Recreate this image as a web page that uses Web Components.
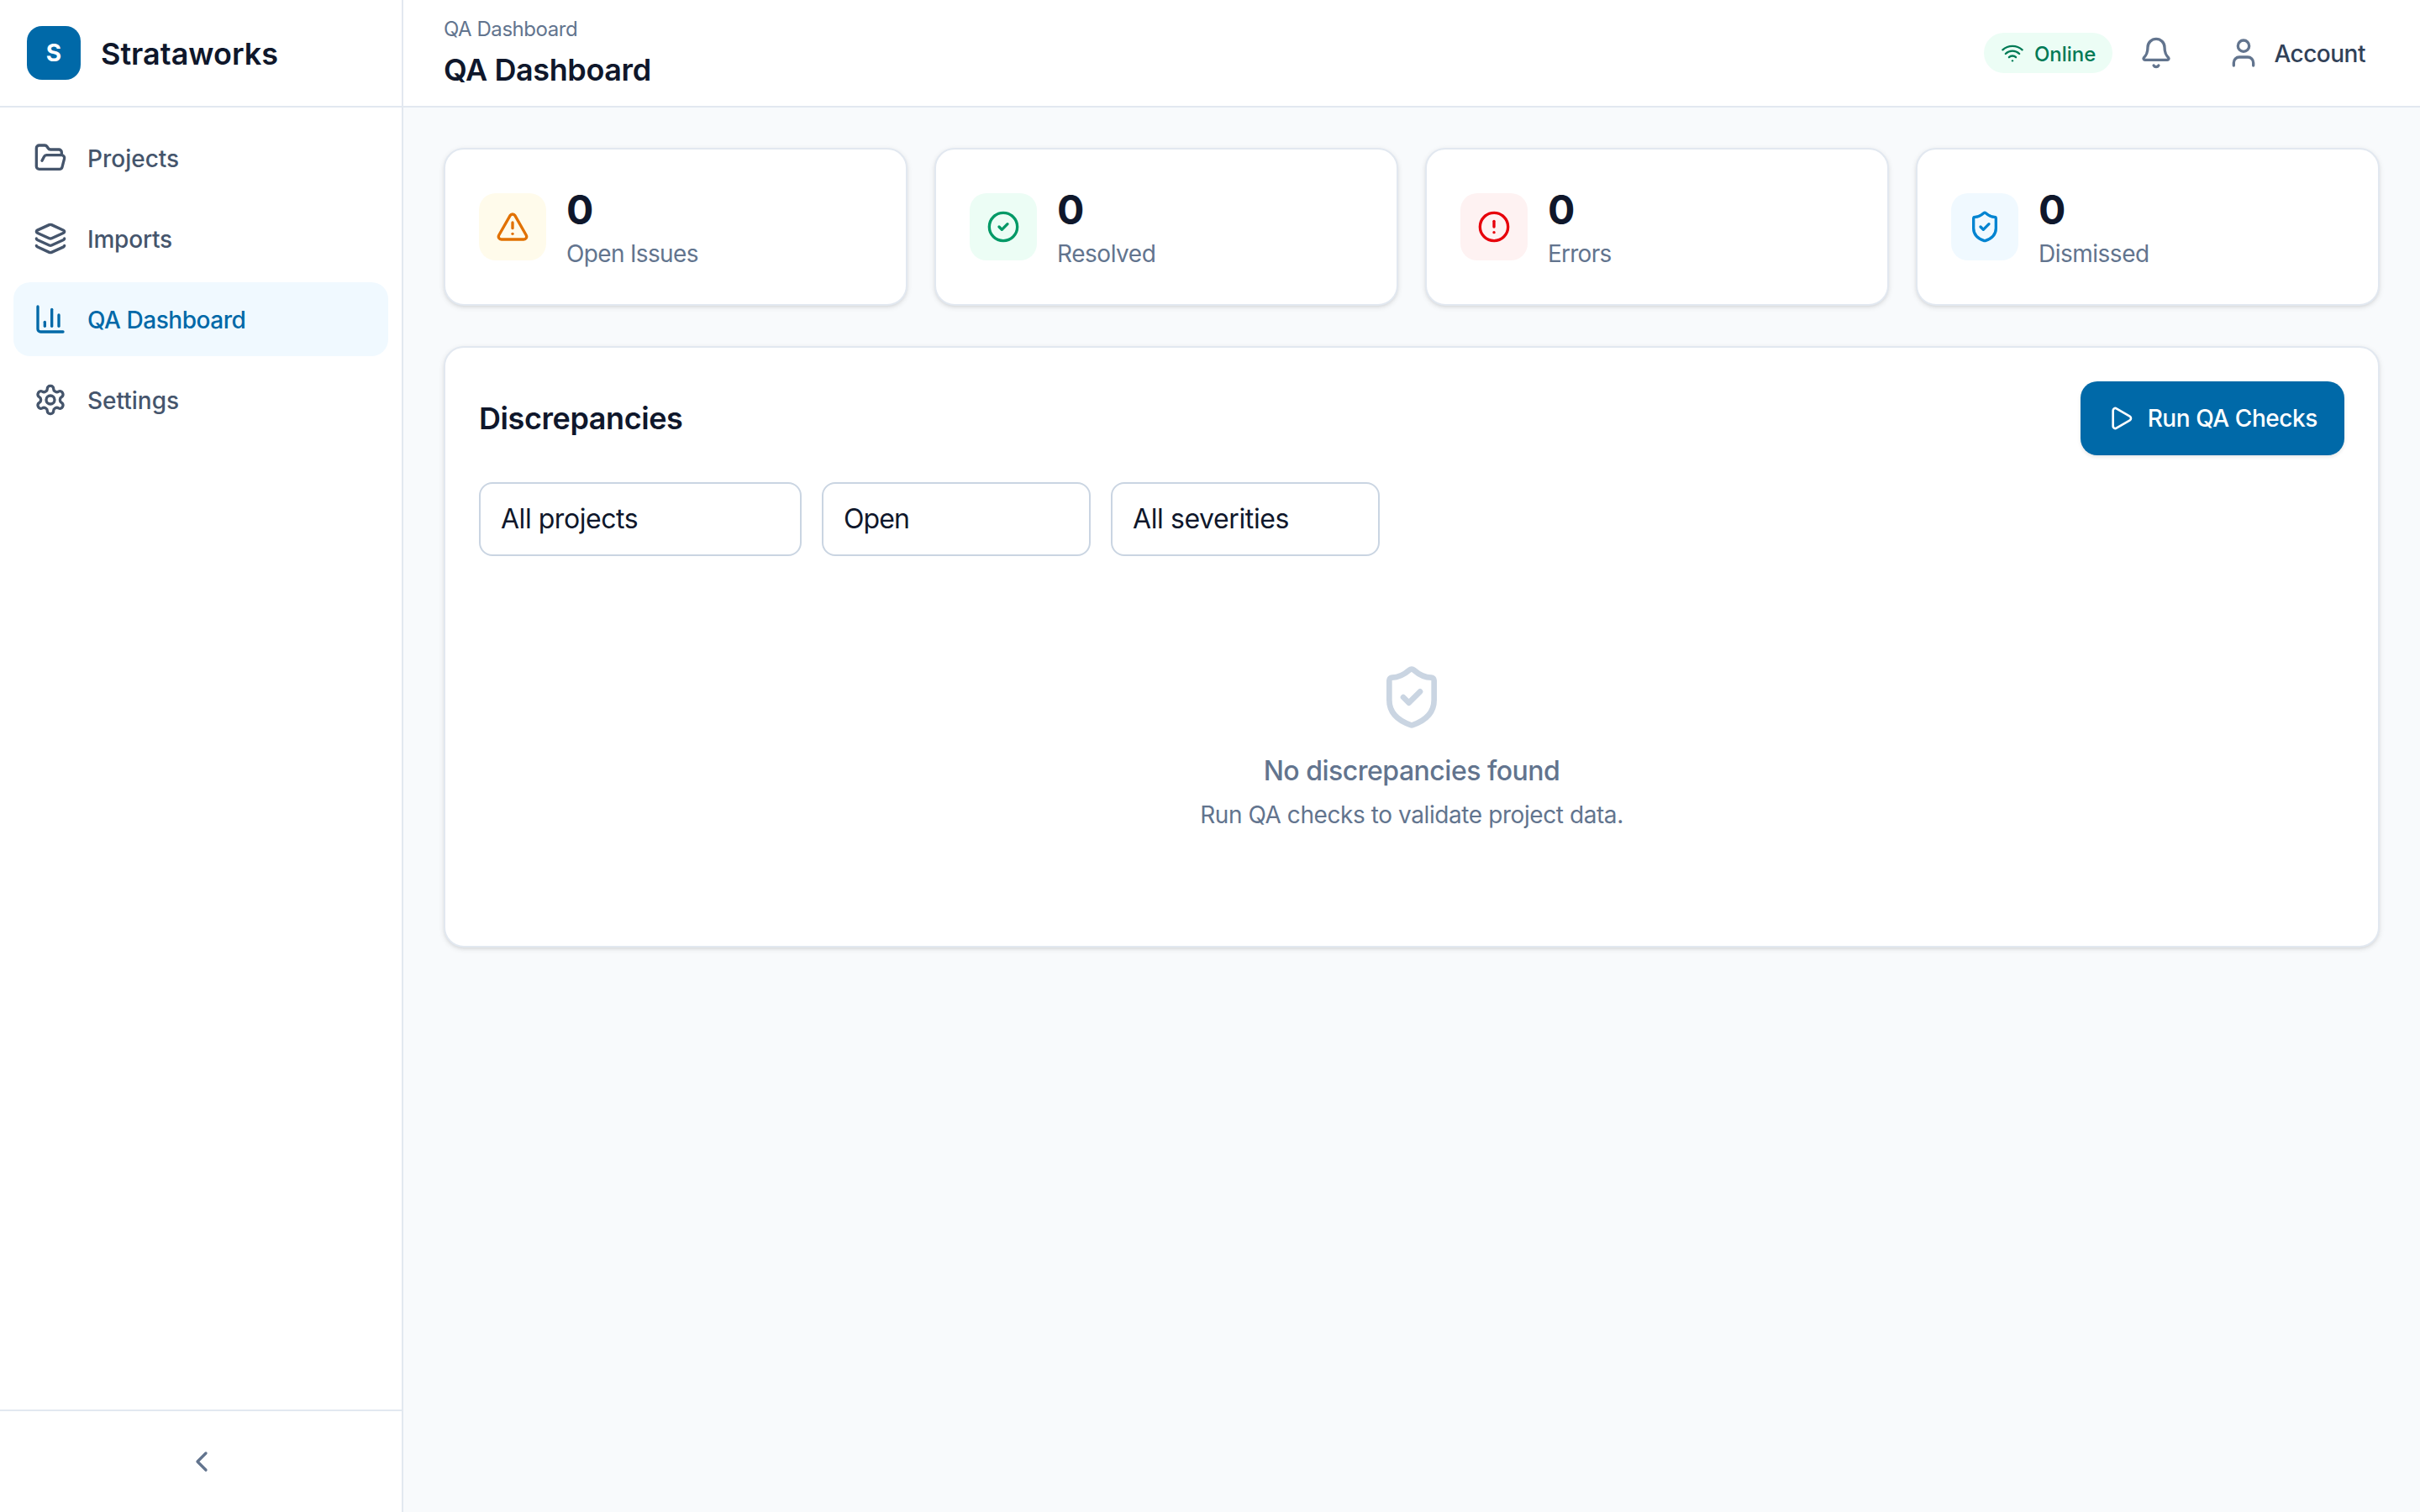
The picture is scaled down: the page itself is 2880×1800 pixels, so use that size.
<!DOCTYPE html>
<html lang="en">
<head>
<meta charset="utf-8">
<title>Strataworks QA Dashboard</title>
<style>
html,body{margin:0;padding:0;height:100%;background:#f8fafc;font-family:Inter,"Liberation Sans",sans-serif;color:#0f172b;-webkit-font-smoothing:antialiased}
</style>
</head>
<body>
<app-shell>
  <side-bar slot="side">
    <nav-item icon="folder">Projects</nav-item>
    <nav-item icon="layers" style="letter-spacing:-.2px">Imports</nav-item>
    <nav-item icon="chart" active style="letter-spacing:-.45px">QA Dashboard</nav-item>
    <nav-item icon="settings">Settings</nav-item>
  </side-bar>
  <top-bar slot="top" crumb="QA Dashboard" heading="QA Dashboard"></top-bar>
  <stat-row>
    <stat-card icon="triangle" tone="amber" value="0" style="letter-spacing:-.66px">Open Issues</stat-card>
    <stat-card icon="check" tone="green" value="0" style="letter-spacing:-.46px">Resolved</stat-card>
    <stat-card icon="alert" tone="red" value="0" style="letter-spacing:-.76px">Errors</stat-card>
    <stat-card icon="shield" tone="sky" value="0" style="letter-spacing:-.5px">Dismissed</stat-card>
  </stat-row>
  <qa-panel heading="Discrepancies">
    <filter-box style="width:384px;letter-spacing:-.46px">All projects</filter-box>
    <filter-box style="width:320px;letter-spacing:-.9px">Open</filter-box>
    <filter-box style="width:320px;letter-spacing:-.4px">All severities</filter-box>
    <empty-state slot="body" heading="No discrepancies found">Run QA checks to validate project data.</empty-state>
  </qa-panel>
</app-shell>
<script>
const ICONS = {
  folder:'<path d="m6 14 1.5-2.9A2 2 0 0 1 9.24 10H20a2 2 0 0 1 1.94 2.5l-1.54 6a2 2 0 0 1-1.94 1.5H4a2 2 0 0 1-2-2V5a2 2 0 0 1 2-2h3.9a2 2 0 0 1 1.69.9l.81 1.2a2 2 0 0 0 1.69.9H18a2 2 0 0 1 2 2v2"/>',
  layers:'<path d="M12.83 2.18a2 2 0 0 0-1.66 0L2.6 6.08a1 1 0 0 0 0 1.83l8.58 3.91a2 2 0 0 0 1.66 0l8.58-3.9a1 1 0 0 0 0-1.83z"/><path d="M2 12a1 1 0 0 0 .58.91l8.6 3.91a2 2 0 0 0 1.65 0l8.58-3.9A1 1 0 0 0 22 12"/><path d="M2 17a1 1 0 0 0 .58.91l8.6 3.91a2 2 0 0 0 1.65 0l8.58-3.9A1 1 0 0 0 22 17"/>',
  chart:'<path d="M3 3v16a2 2 0 0 0 2 2h16"/><path d="M18 17V9"/><path d="M13 17V5"/><path d="M8 17v-3"/>',
  settings:'<path d="M12.22 2h-.44a2 2 0 0 0-2 2v.18a2 2 0 0 1-1 1.73l-.43.25a2 2 0 0 1-2 0l-.15-.08a2 2 0 0 0-2.73.73l-.22.38a2 2 0 0 0 .73 2.73l.15.1a2 2 0 0 1 1 1.72v.51a2 2 0 0 1-1 1.74l-.15.09a2 2 0 0 0-.73 2.73l.22.38a2 2 0 0 0 2.73.73l.15-.08a2 2 0 0 1 2 0l.43.25a2 2 0 0 1 1 1.73V20a2 2 0 0 0 2 2h.44a2 2 0 0 0 2-2v-.18a2 2 0 0 1 1-1.73l.43-.25a2 2 0 0 1 2 0l.15.08a2 2 0 0 0 2.73-.73l.22-.39a2 2 0 0 0-.73-2.73l-.15-.08a2 2 0 0 1-1-1.74v-.5a2 2 0 0 1 1-1.74l.15-.09a2 2 0 0 0 .73-2.73l-.22-.38a2 2 0 0 0-2.73-.73l-.15.08a2 2 0 0 1-2 0l-.43-.25a2 2 0 0 1-1-1.73V4a2 2 0 0 0-2-2z"/><circle cx="12" cy="12" r="3"/>',
  triangle:'<path d="m21.73 18-8-14a2 2 0 0 0-3.48 0l-8 14A2 2 0 0 0 4 21h16a2 2 0 0 0 1.73-3"/><path d="M12 9v4"/><path d="M12 17h.01"/>',
  check:'<circle cx="12" cy="12" r="10"/><path d="m9 12 2 2 4-4"/>',
  alert:'<circle cx="12" cy="12" r="10"/><line x1="12" x2="12" y1="8" y2="12"/><line x1="12" x2="12.01" y1="16" y2="16"/>',
  shield:'<path d="M20 13c0 5-3.5 7.5-7.66 8.95a1 1 0 0 1-.67-.01C7.5 20.5 4 18 4 13V6a1 1 0 0 1 1-1c2 0 4.5-1.2 6.24-2.72a1.17 1.17 0 0 1 1.52 0C14.51 3.81 17 5 19 5a1 1 0 0 1 1 1z"/><path d="m9 12 2 2 4-4"/>',
  wifi:'<path d="M12 20h.01"/><path d="M2 8.82a15 15 0 0 1 20 0"/><path d="M5 12.859a10 10 0 0 1 14 0"/><path d="M8.5 16.429a5 5 0 0 1 7 0"/>',
  bell:'<path d="M10.268 21a2 2 0 0 0 3.464 0"/><path d="M3.262 15.326A1 1 0 0 0 4 17h16a1 1 0 0 0 .74-1.673C19.41 13.956 18 12.499 18 8A6 6 0 0 0 6 8c0 4.499-1.411 5.956-2.738 7.326"/>',
  user:'<path d="M19 21v-2a4 4 0 0 0-4-4H9a4 4 0 0 0-4 4v2"/><circle cx="12" cy="7" r="4"/>',
  play:'<path d="M5 5a2 2 0 0 1 3.008-1.728l11.997 6.998a2 2 0 0 1 .003 3.458l-12 7A2 2 0 0 1 5 19z"/>',
  chevron:'<path d="m15 18-6-6 6-6"/>'
};
class UiIcon extends HTMLElement {
  connectedCallback(){
    const s = this.getAttribute('size') || 40;
    this.attachShadow({mode:'open'}).innerHTML = `<style>:host{display:inline-flex;flex:none;width:${s}px;height:${s}px}svg{display:block}</style><svg xmlns="http://www.w3.org/2000/svg" width="${s}" height="${s}" viewBox="0 0 24 24" fill="none" stroke="currentColor" stroke-width="2" stroke-linecap="round" stroke-linejoin="round">${ICONS[this.getAttribute('name')]}</svg>`;
  }
}
customElements.define('ui-icon', UiIcon);

class AppShell extends HTMLElement {
  constructor(){
    super();
    this.attachShadow({mode:'open'}).innerHTML = `<style>
      :host{display:flex;height:100vh;min-height:1800px;overflow:hidden}
      .col{flex:1;min-width:0;display:flex;flex-direction:column}
      main{flex:1;display:flex;flex-direction:column;gap:48px;padding:48px}
    </style><slot name="side"></slot><div class="col"><slot name="top"></slot><main><slot></slot></main></div>`;
  }
}
customElements.define('app-shell', AppShell);

class SideBar extends HTMLElement {
  constructor(){
    super();
    this.attachShadow({mode:'open'}).innerHTML = `<style>
      :host{display:flex;flex-direction:column;flex:none;box-sizing:border-box;width:480px;background:#fff;border-right:2px solid #e2e8f0}
      .brand{box-sizing:border-box;height:128px;display:flex;align-items:center;gap:24px;padding:0 32px;border-bottom:2px solid #e2e8f0}
      .logo{width:64px;height:64px;border-radius:18px;background:#0069a8;color:#fff;display:flex;align-items:center;justify-content:center;font-size:28px;font-weight:700}
      .name{font-size:36px;font-weight:600;color:#0f172b;line-height:56px;padding-top:2px}
      nav{flex:1;display:flex;flex-direction:column;gap:8px;padding:16px}
      footer{box-sizing:border-box;height:122px;padding-left:2px;border-top:2px solid #e2e8f0;display:flex;align-items:center;justify-content:center;color:#62748e}
    </style>
    <div class="brand"><div class="logo">S</div><div class="name">Strataworks</div></div>
    <nav><slot></slot></nav>
    <footer><ui-icon name="chevron"></ui-icon></footer>`;
  }
}
customElements.define('side-bar', SideBar);

class NavItem extends HTMLElement {
  constructor(){
    super();
    this.attachShadow({mode:'open'}).innerHTML = `<style>
      :host{display:flex;align-items:center;gap:24px;height:88px;padding:0 24px;border-radius:20px;font-size:28px;font-weight:500;color:#45556c}
      :host([active]){background:#f0f9ff;color:#0069a8}
      span{padding-top:2px}
    </style><ui-icon name="${this.getAttribute('icon')}"></ui-icon><span><slot></slot></span>`;
  }
}
customElements.define('nav-item', NavItem);

class TopBar extends HTMLElement {
  constructor(){
    super();
    this.attachShadow({mode:'open'}).innerHTML = `<style>
      :host{display:flex;align-items:center;justify-content:space-between;box-sizing:border-box;height:128px;padding:0 48px;background:#fff;border-bottom:2px solid #e2e8f0}
      .titles{padding-top:3px}
      .crumb{font-size:24px;line-height:32px;color:#62748e;margin-bottom:4px;letter-spacing:-.45px}
      .h{font-size:36px;line-height:56px;font-weight:600;color:#0f172b;letter-spacing:-.4px}
      .right{display:flex;align-items:center}
      .pill{display:flex;align-items:center;gap:12px;height:48px;padding:0 20px;border-radius:24px;background:#ecfdf5;color:#007a55;font-size:24px;font-weight:500}
      .pill span,.acct span{padding-top:2px}
      .bell{display:flex;padding:16px;margin-left:16px;color:#62748e}
      .acct{display:flex;align-items:center;gap:16px;padding:0 0 0 16px;margin-left:32px;font-size:28px;font-weight:500;color:#314158;letter-spacing:-.5px;margin-right:17px}
      .acct ui-icon{color:#62748e}
    </style>
    <div class="titles"><div class="crumb">${this.getAttribute('crumb')}</div><div class="h">${this.getAttribute('heading')}</div></div>
    <div class="right">
      <div class="pill"><ui-icon name="wifi" size="28"></ui-icon><span>Online</span></div>
      <div class="bell"><ui-icon name="bell"></ui-icon></div>
      <div class="acct"><ui-icon name="user"></ui-icon><span>Account</span></div>
    </div>`;
  }
}
customElements.define('top-bar', TopBar);

class StatRow extends HTMLElement {
  constructor(){
    super();
    this.attachShadow({mode:'open'}).innerHTML = `<style>:host{display:grid;grid-template-columns:repeat(4,1fr);gap:32px}</style><slot></slot>`;
  }
}
customElements.define('stat-row', StatRow);

const TONES = {amber:['#fffbeb','#e17100'],green:['#ecfdf5','#009966'],red:['#fef2f2','#e7000b'],sky:['#f0f9ff','#0084d1']};
class StatCard extends HTMLElement {
  constructor(){
    super();
    const [bg,fg] = TONES[this.getAttribute('tone')];
    this.attachShadow({mode:'open'}).innerHTML = `<style>
      :host{display:flex;align-items:center;gap:24px;padding:40px;background:#fff;border:2px solid #e2e8f0;border-radius:24px;box-shadow:0 2px 6px rgba(0,0,0,.1),0 2px 4px -2px rgba(0,0,0,.1)}
      .ic{width:80px;height:80px;border-radius:20px;background:${bg};color:${fg};display:flex;align-items:center;justify-content:center}
      .v{font-size:48px;line-height:64px;font-weight:700;color:#0f172b;letter-spacing:0}
      .l{font-size:28px;line-height:40px;color:#62748e}
    </style><div class="ic"><ui-icon name="${this.getAttribute('icon')}"></ui-icon></div><div><div class="v">${this.getAttribute('value')}</div><div class="l"><slot></slot></div></div>`;
  }
}
customElements.define('stat-card', StatCard);

class QaPanel extends HTMLElement {
  constructor(){
    super();
    this.attachShadow({mode:'open'}).innerHTML = `<style>
      :host{display:block;padding:40px;background:#fff;border:2px solid #e2e8f0;border-radius:24px;box-shadow:0 2px 6px rgba(0,0,0,.1),0 2px 4px -2px rgba(0,0,0,.1)}
      .head{display:flex;align-items:center;justify-content:space-between;margin-bottom:32px}
      h2{margin:0;font-size:36px;line-height:56px;font-weight:600;color:#0f172b;letter-spacing:-.42px}
      .btn{display:flex;align-items:center;gap:16px;height:88px;padding:0 32px;border-radius:20px;background:#0069a8;color:#fff;font-size:28px;font-weight:500;letter-spacing:-.42px;box-shadow:0 2px 4px rgba(0,0,0,.1)}
      .filters{display:flex;gap:24px;margin-bottom:32px}
    </style>
    <div class="head"><h2>${this.getAttribute('heading')}</h2><div class="btn"><ui-icon name="play" size="32"></ui-icon><span>Run QA Checks</span></div></div>
    <div class="filters"><slot></slot></div>
    <slot name="body"></slot>`;
  }
}
customElements.define('qa-panel', QaPanel);

class FilterBox extends HTMLElement {
  constructor(){
    super();
    this.attachShadow({mode:'open'}).innerHTML = `<style>
      :host{display:flex;align-items:center;box-sizing:border-box;height:88px;padding:0 24px 2px;background:#fff;border:2px solid #cad5e2;border-radius:16px;font-size:32px;color:#0f172b}
    </style><slot></slot>`;
  }
}
customElements.define('filter-box', FilterBox);

class EmptyState extends HTMLElement {
  constructor(){
    super();
    this.attachShadow({mode:'open'}).innerHTML = `<style>
      :host{display:flex;flex-direction:column;align-items:center;padding:96px 0;text-align:center}
      ui-icon{color:#cad5e2;margin-bottom:24px}
      .h{font-size:32px;line-height:48px;font-weight:500;color:#62748e;margin-bottom:8px;letter-spacing:-.5px}
      .p{font-size:28px;line-height:40px;color:#62748e;letter-spacing:-.42px}
    </style><ui-icon name="shield" size="80"></ui-icon><div class="h">${this.getAttribute('heading')}</div><div class="p"><slot></slot></div>`;
  }
}
customElements.define('empty-state', EmptyState);
</script>
</body>
</html>
